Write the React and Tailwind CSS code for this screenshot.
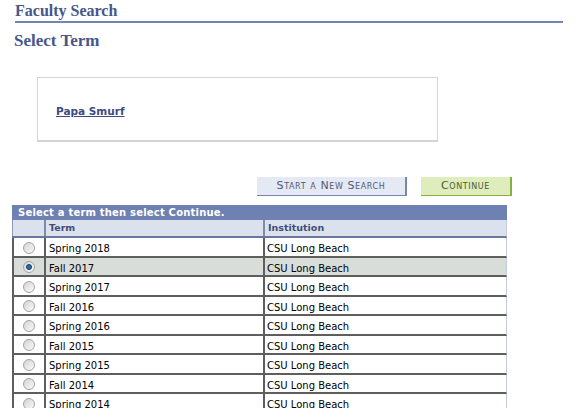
import React from "react";

const rows = [
  "Spring 2018",
  "Fall 2017",
  "Spring 2017",
  "Fall 2016",
  "Spring 2016",
  "Fall 2015",
  "Spring 2015",
  "Fall 2014",
  "Spring 2014",
];

function Radio({ checked }) {
  return (
    <span className="inline-flex items-center justify-center w-[12px] h-[12px] rounded-full border border-[#a4a4a4] bg-gradient-to-br from-[#d4d4d4] to-[#fafafa]">
      {checked && (
        <span className="w-[6px] h-[6px] rounded-full bg-[#2a6aa8] border border-[#0f3f6f]" />
      )}
    </span>
  );
}

export default function App() {
  const sans = { fontFamily: '"DejaVu Sans", Verdana, sans-serif' };
  return (
    <div className="w-[575px] h-[408px] overflow-hidden bg-white relative">
      <div className="pl-[15px] pr-[12px] pt-[1px]">
        <div
          className="text-[16px] font-bold text-[#47568b] leading-[19px] pb-[1px] border-b-2 border-[#7583b5]"
          style={{ fontFamily: '"Liberation Serif", serif' }}
        >
          Faculty Search
        </div>
      </div>
      <div
        className="pl-[14px] mt-[8px] text-[17px] font-bold text-[#47568b] leading-[20px]"
        style={{ fontFamily: '"Liberation Serif", serif' }}
      >
        Select Term
      </div>
      <div className="ml-[37px] mt-[26px] w-[401px] h-[65px] border border-[#d4d4d4] border-b-2 flex items-center pl-[18px] pt-[5px]">
        <a
          href="#"
          className="text-[10.5px] font-bold text-[#3b4a84] underline"
          style={sans}
        >
          Papa Smurf
        </a>
      </div>
      <div className="flex ml-[257px] mt-[35px] gap-[14px]">
        <div
          className="w-[150px] h-[19px] bg-[#e4e9f3] border-r-2 border-b border-[#7785b5] flex items-center justify-center text-[11px] text-[#505a78] tracking-[0.6px]"
          style={{ ...sans, fontVariant: "small-caps" }}
        >
          Start a New Search
        </div>
        <div
          className="w-[91px] h-[19px] bg-[#dfecbb] border-r-2 border-b border-[#86b040] flex items-center justify-center text-[11px] text-[#4a6030] tracking-[0.6px]"
          style={{ ...sans, fontVariant: "small-caps" }}
        >
          Continue
        </div>
      </div>
      <div className="ml-[12px] mt-[9px] w-[495px]" style={sans}>
        <div className="h-[15px] bg-[#6f80b3] text-white text-[10px] font-bold tracking-[0.2px] leading-[15px] pl-[6px]">
          Select a term then select Continue.
        </div>
        <div className="flex h-[18px] bg-[#dbe2ee] border-b-2 border-[#69779f] border-r border-r-[#c3cbdd] text-[9.5px] font-bold text-[#3f4d78]">
          <div className="w-[32px] border-l border-[#8d99bb]" />
          <div className="w-[219px] border-l-2 border-[#7d89ad] pl-[3px] pt-[1px] flex items-center">Term</div>
          <div className="flex-1 border-l-2 border-[#7d89ad] pl-[3px] pt-[1px] flex items-center">Institution</div>
        </div>
        {rows.map((r, i) => (
          <div
            key={r}
            className={`flex h-[19.5px] border-b-2 border-[#5e5e5e] border-r border-r-[#c3cbdd] text-[10px] text-black ${
              i === 1 ? "bg-[#d9ddda]" : "bg-white"
            }`}
          >
            <div className="w-[32px] border-l-2 border-[#5e5e5e] flex items-center justify-center pt-[2px]">
              <Radio checked={i === 1} />
            </div>
            <div className="w-[219px] border-l-2 border-[#5e5e5e] pl-[3px] pt-[4px] flex items-center">{r}</div>
            <div className="flex-1 border-l-2 border-[#5e5e5e] pl-[2px] pt-[4px] flex items-center">CSU Long Beach</div>
          </div>
        ))}
      </div>
    </div>
  );
}
